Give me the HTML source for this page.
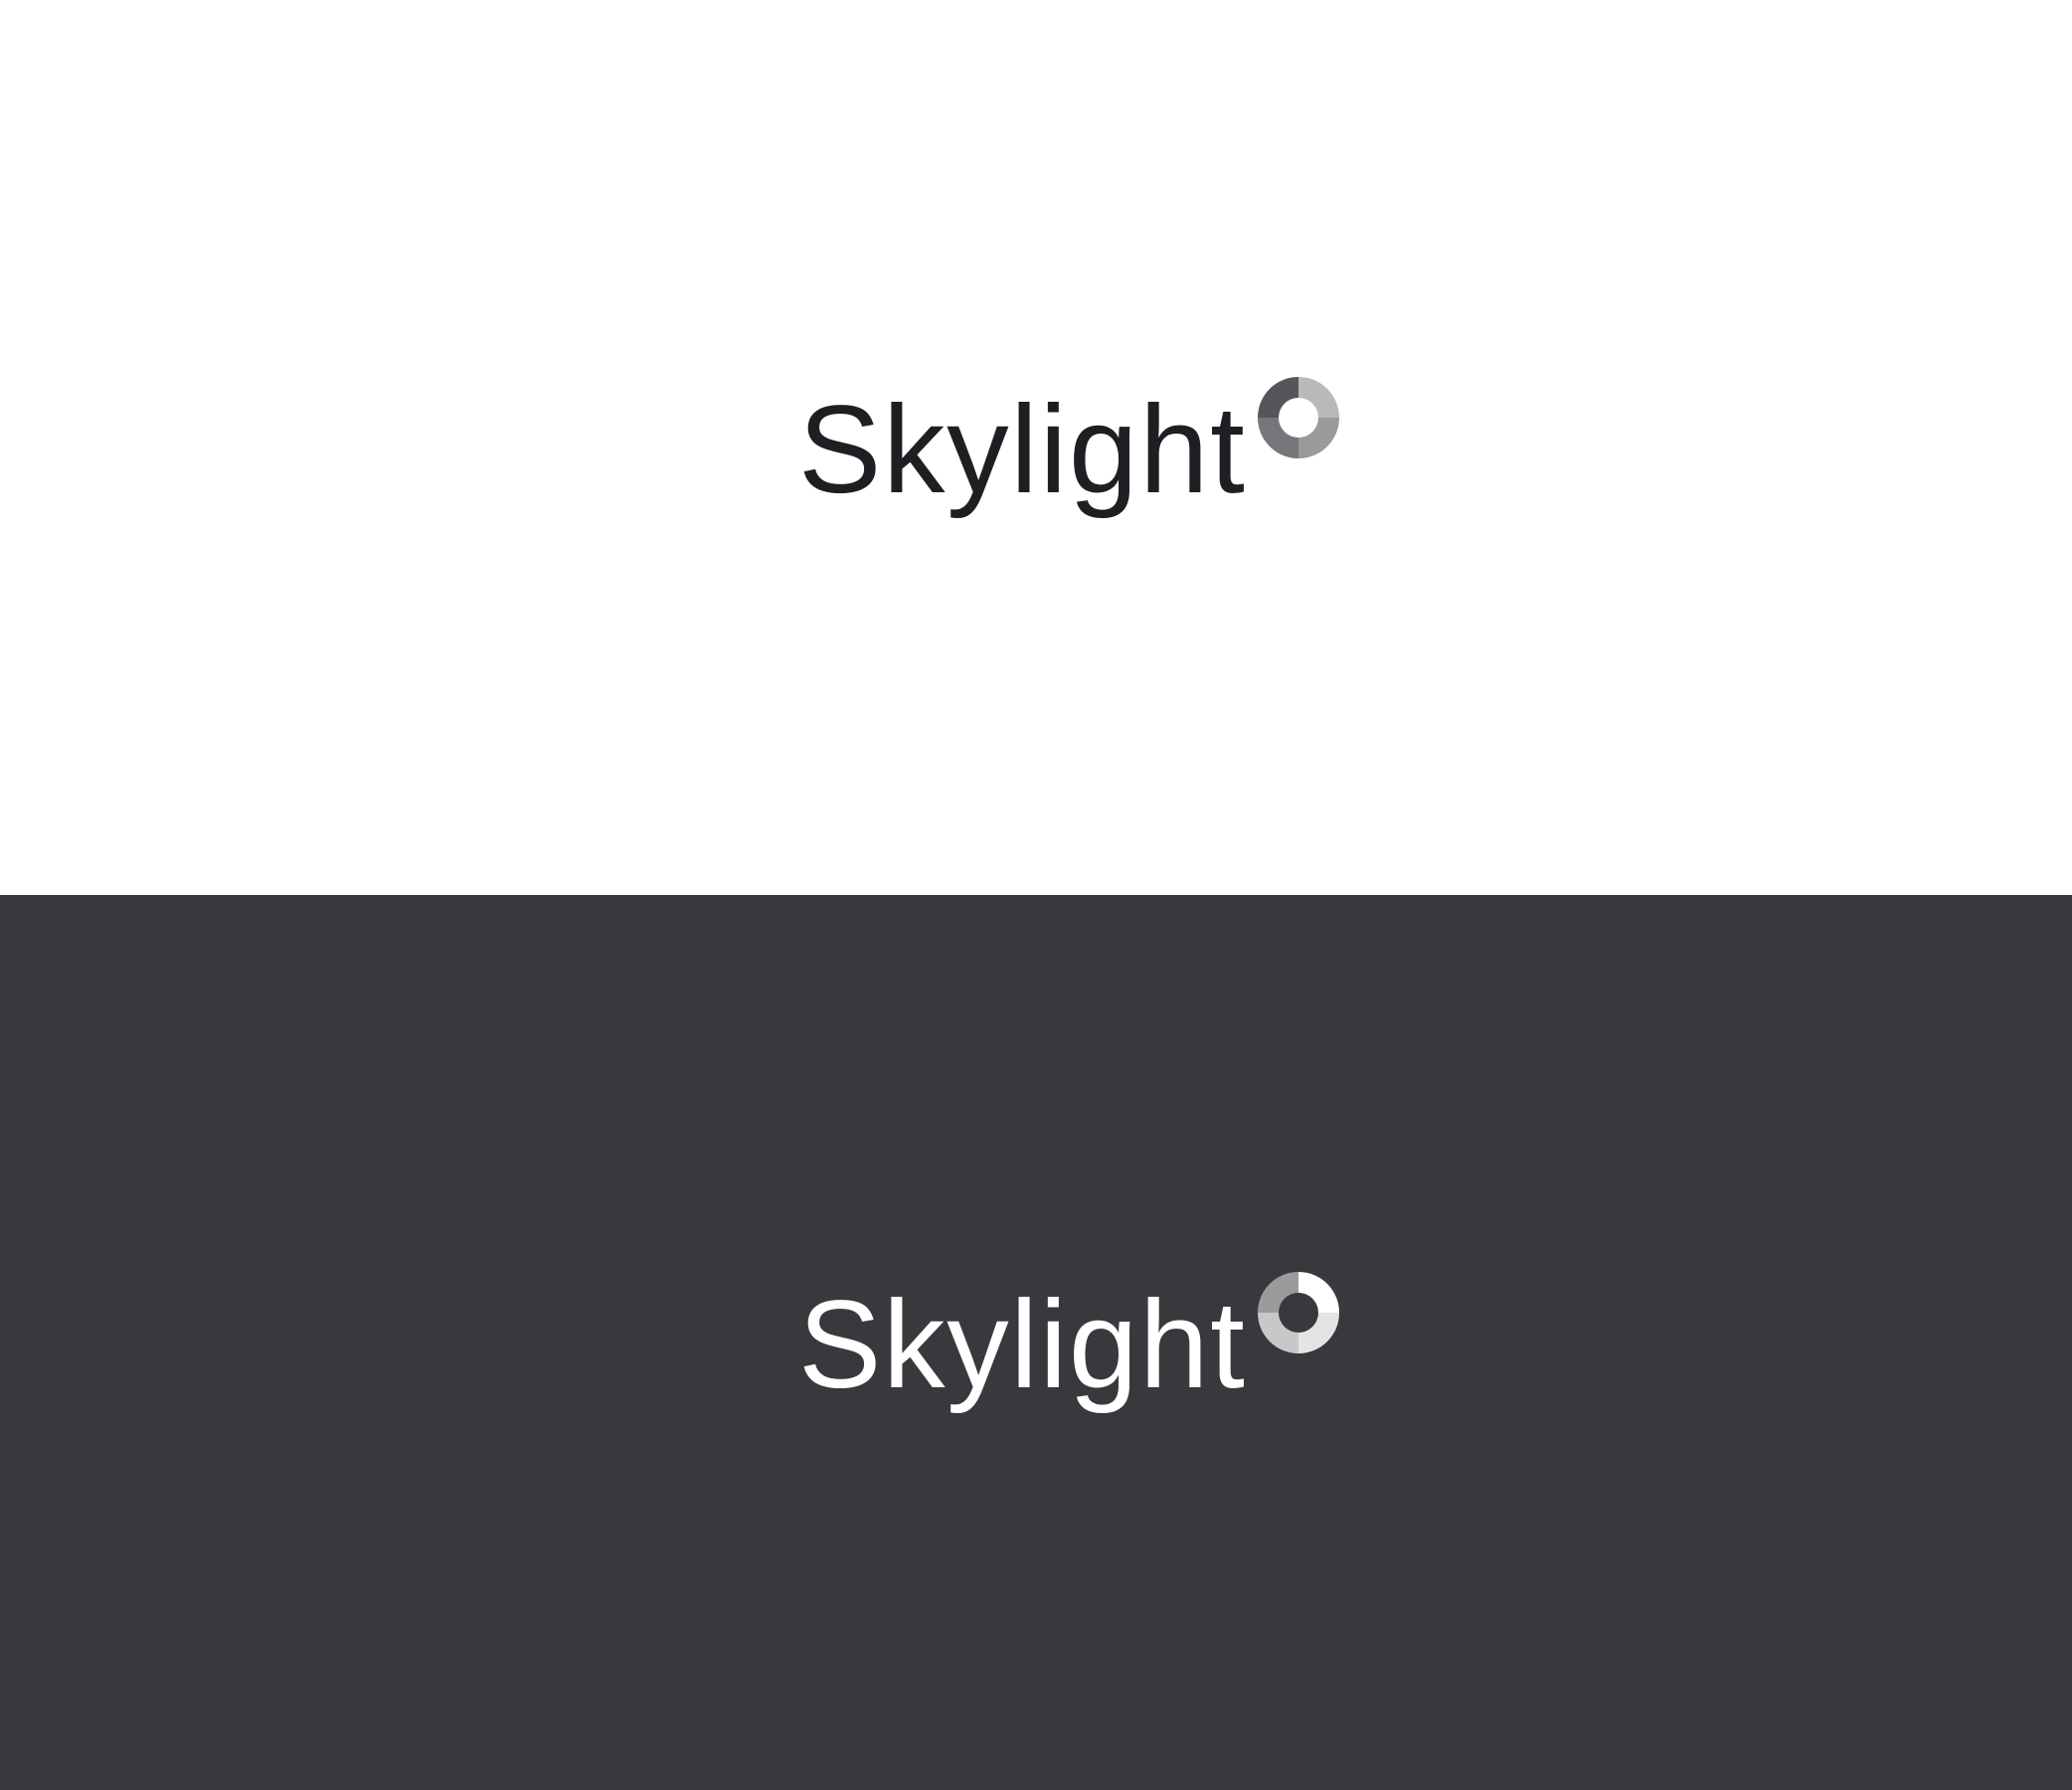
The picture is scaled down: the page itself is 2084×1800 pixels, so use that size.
<!DOCTYPE html>
<html><head><style>
body{margin:0;width:2084px;height:1800px;position:relative;overflow:hidden;font-family:"Liberation Sans",sans-serif}
.top{position:absolute;left:0;top:0;width:2084px;height:900px;background:#fff}
.bot{position:absolute;left:0;top:900px;width:2084px;height:900px;background:#38393d}
.t{position:absolute;left:803px;font-size:125px;line-height:1;white-space:nowrap;letter-spacing:1.6px}
svg{position:absolute}
</style></head><body>
<div class="top">
<div class="t" style="top:390px;color:#1e1f22">Skylight</div>
<svg style="left:1265px;top:379px" width="82" height="82" viewBox="-41 -41 82 82">
<path d="M0,0V-41A41,41 0 0 0 -41,0Z" fill="#55565a"/>
<path d="M0,0V-41A41,41 0 0 1 41,0Z" fill="#b9b9bb"/>
<path d="M0,0H-41A41,41 0 0 0 0,41Z" fill="#77777b"/>
<path d="M0,0H41A41,41 0 0 1 0,41Z" fill="#9a9a9c"/>
<circle r="20" fill="#fff"/>
</svg>
</div>
<div class="bot">
<div class="t" style="top:390px;color:#fff">Skylight</div>
<svg style="left:1265px;top:379px" width="82" height="82" viewBox="-41 -41 82 82">
<path d="M0,0V-41A41,41 0 0 0 -41,0Z" fill="#9b9b9d"/>
<path d="M0,0V-41A41,41 0 0 1 41,0Z" fill="#ffffff"/>
<path d="M0,0H-41A41,41 0 0 0 0,41Z" fill="#c8c8ca"/>
<path d="M0,0H41A41,41 0 0 1 0,41Z" fill="#e4e4e5"/>
<circle r="20" fill="#38393d"/>
</svg>
</div>
</body></html>
